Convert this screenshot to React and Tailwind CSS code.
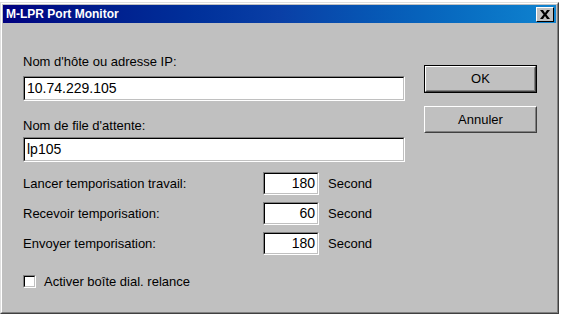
const sunken =
  "border-t-[#808080] border-l-[#808080] border-b-white border-r-white border";
const sunkenInner =
  "border-t-black border-l-black border-b-[#c0c0c0] border-r-[#c0c0c0] border";

function TextBox({ value, className, align = "left" }) {
  return (
    <div className={`${sunken} ${className}`}>
      <div
        className={`${sunkenInner} flex h-full items-center bg-white px-[2px] text-[14px] text-black ${
          align === "right" ? "justify-end" : "justify-start"
        }`}
      >
        {value}
      </div>
    </div>
  );
}

function Button({ label, isDefault }) {
  const face = (
    <div className="border border-t-white border-l-white border-b-[#404040] border-r-[#404040] h-full">
      <div className="flex h-full items-center justify-center border border-t-[#c0c0c0] border-l-[#c0c0c0] border-b-[#808080] border-r-[#808080] text-[13px] text-black">
        {label}
      </div>
    </div>
  );
  if (isDefault) {
    return <div className="h-[28px] border border-black">{face}</div>;
  }
  return <div className="h-[27px]">{face}</div>;
}

const timers = [
  { label: "Lancer temporisation travail:", value: "180" },
  { label: "Recevoir temporisation:", value: "60" },
  { label: "Envoyer temporisation:", value: "180" },
];

export default function App() {
  return (
    <div
      className="h-[318px] w-[562px] bg-white pt-[2px]"
      style={{ fontFamily: '"Liberation Sans", Arial, sans-serif' }}
    >
      <div className="h-[312px] w-[559px] border border-t-[#dfdfdf] border-l-[#dfdfdf] border-b-[#404040] border-r-[#404040]">
        <div className="flex h-full flex-col border border-t-white border-l-white border-b-[#808080] border-r-[#808080] bg-[#c0c0c0] p-[1px]">
          <div className="flex h-[18px] items-center justify-between bg-gradient-to-r from-[#000080] via-[#0a3fa6] to-[#1084d0] pl-[3px] pr-[2px]">
            <span className="text-[12px] font-bold text-white">M-LPR Port Monitor</span>
            <div className="flex h-[15px] w-[18px] items-center justify-center border border-t-white border-l-white border-b-black border-r-black bg-[#c0c0c0]">
              <svg width="10" height="9" viewBox="0 0 10 9">
                <path d="M0 0h3l2 3 2-3h3L6.5 4.5 10 9H7L5 6 3 9H0l3.5-4.5z" fill="black" />
              </svg>
            </div>
          </div>

          <div className="flex flex-1 pl-[20px] pt-[31px] text-[13px] text-black">
            <div className="w-[382px]">
              <div className="leading-[16px]">Nom d'hôte ou adresse IP:</div>
              <TextBox value="10.74.229.105" className="mt-[6px] h-[25px] w-full" />

              <div className="mt-[17px] leading-[16px]">Nom de file d'attente:</div>
              <TextBox value="lp105" className="mt-[3px] h-[25px] w-full" />

              <div className="mt-[10px] flex flex-col gap-[7px]">
                {timers.map((t) => (
                  <div key={t.label} className="flex h-[23px] items-center">
                    <span className="w-[240px]">{t.label}</span>
                    <TextBox value={t.value} align="right" className="h-[23px] w-[56px]" />
                    <span className="ml-[9px]">Second</span>
                  </div>
                ))}
              </div>

              <div className="mt-[17px] flex items-center">
                <div className={`${sunken} h-[13px] w-[13px]`}>
                  <div className={`${sunkenInner} h-full bg-white`} />
                </div>
                <span className="ml-[8px]">Activer boîte dial. relance</span>
              </div>
            </div>

            <div className="ml-[19px] flex w-[113px] flex-col pt-[11px]">
              <Button label="OK" isDefault />
              <div className="mt-[13px]">
                <Button label="Annuler" />
              </div>
            </div>
          </div>
        </div>
      </div>
    </div>
  );
}
